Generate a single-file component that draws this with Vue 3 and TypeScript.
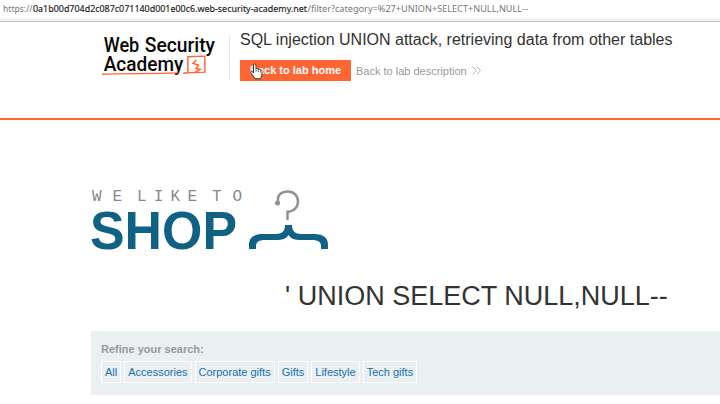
<script setup lang="ts">
const categories: string[] = ['All', 'Accessories', 'Corporate gifts', 'Gifts', 'Lifestyle', 'Tech gifts']
</script>

<template>
  <div class="page">
    <div class="address">
      <svg width="540" height="18" role="img">
        <text class="url dim" x="3" y="12" textLength="29.5" lengthAdjust="spacingAndGlyphs">https://</text>
        <text class="url host" x="33" y="12" textLength="274" lengthAdjust="spacingAndGlyphs">0a1b00d704d2c087c071140d001e00c6.web-security-academy.net</text>
        <text class="url dim" x="307.500" y="12" textLength="220.500" lengthAdjust="spacingAndGlyphs">/filter?category=%27+UNION+SELECT+NULL,NULL--</text>
      </svg>
    </div>

    <header class="banner">
      <svg class="academy" width="139" height="52" viewBox="0 0 139 52">
        <g class="academy-name">
          <text x="3" y="19" textLength="42" lengthAdjust="spacingAndGlyphs">Web</text>
          <text x="51.500" y="19" textLength="83" lengthAdjust="spacingAndGlyphs">Security</text>
          <text x="3" y="41" textLength="94" lengthAdjust="spacingAndGlyphs">Academy</text>
        </g>
        <path d="M1 45.200C25 44.200 59 44.800 91 43.600M97 43.700H102M102.500 44V24.500L122.500 23.800V42.700L102 43.500" fill="none" stroke="#ff6633" stroke-width="1.700" />
        <path d="M112.500 28.500L108.500 32.500L115 34.500L112 38.500L117 39.500L113 42L111 41.500" fill="none" stroke="#ff6633" stroke-width="1.700" />
      </svg>
      <div class="lab">
        <h2>SQL injection UNION attack, retrieving data from other tables</h2>
        <div class="actions">
          <a class="home">Back to lab home
            <svg class="pointer" width="13" height="17" viewBox="0 0 13 17">
              <path d="M3.500 9V2.200C3.500.5 6 .5 6 2.200V6C6.300 5 8 5.200 8.200 6.500C8.700 5.700 10 6 10.200 7.200C11 6.800 12 7.300 12 8.500V12C12 13.500 10.800 14.300 10.500 15.800H5C4.500 13.700 1 11.200.8 9.300C.8 8 2.300 7.800 3.500 10Z" fill="#fff" stroke="#33302e" stroke-width="1" />
              <path d="M6 6V9M8.200 6.500V9M10.200 7.500V9.500" fill="none" stroke="#444" stroke-width=".7" />
            </svg>
          </a>
          <a class="description">Back to lab description</a>
          <svg class="chevrons" width="10" height="9" viewBox="0 0 10 9"><path d="M1 .7L4.500 4.500L1 8.300M5 .7L8.500 4.500L5 8.300" fill="none" stroke="#aaa" stroke-width=".9" /></svg>
        </div>
      </div>
    </header>

    <main class="content">
      <svg class="shop" width="240" height="64" viewBox="0 0 240 64">
        <text class="like" x="1" y="15" textLength="30" lengthAdjust="spacing">WE</text>
        <text class="like" x="46" y="15" textLength="60" lengthAdjust="spacing">LIKE</text>
        <text class="like" x="121" y="15" textLength="30" lengthAdjust="spacing">TO</text>
        <text class="shop-name" x="-1" y="63" textLength="147" lengthAdjust="spacingAndGlyphs">SHOP</text>
        <path d="M187 16C186 8 191 5.500 197 5.500C203 5.500 207 10 207 15.500C207 21 203 25.500 196.500 25.800V34" fill="none" stroke="#929292" stroke-width="2.500" />
        <circle cx="186.500" cy="17" r="2.500" fill="#929292" />
        <path d="M194 39H201C201 45 204 48 210 48H223C233 48 237 52 237 59V63H230V60C230 56 227 54 221 54H210C204 54 200 53 197.500 49C195 53 191 54 185 54H174C168 54 165 56 165 60V63H158V59C158 52 162 48 172 48H185C191 48 194 45 194 39Z" fill="#116185" />
      </svg>
      <h1>' UNION SELECT NULL,NULL--</h1>
      <section class="filters">
        <label>Refine your search:</label>
        <nav><a v-for="category in categories" :key="category">{{ category }}</a></nav>
      </section>
    </main>
  </div>
</template>

<style>
body { margin: 0; background: #fff; overflow: hidden; }
</style>

<style scoped>
* { box-sizing: border-box; }
.page { width: 720px; height: 404px; overflow: hidden; background: #fff; font-family: "Liberation Sans", Arial, sans-serif; color: #333332; }
svg { display: block; flex: none; }
.address { height: 22px; border-bottom: 1px solid #c4c4c4; background: linear-gradient(#fff 18px, #f2f2f2 18px); }
.url { font: 9px "Noto Sans", sans-serif; }
.dim { fill: #777; }
.host { fill: #202020; stroke: #202020; stroke-width: .15px; }
.banner { height: 98px; display: flex; padding: 14px 0 0 91px; border-bottom: 2px solid #ff6633; }
.academy { border-right: 1px solid #e5e5e5; height: 44px; overflow: visible; }
.academy-name { font: 500 24px Roboto, sans-serif; fill: #080808; }
.lab { padding-left: 10px; }
h2 { margin: -6px 0 0; font-size: 16px; line-height: 20px; font-weight: 400; white-space: nowrap; }
.actions { display: flex; align-items: center; margin-top: 10px; height: 21px; font-size: 11px; }
.home { position: relative; width: 111px; height: 21px; background: #ff6633; color: #fff; font-weight: 700; text-align: center; line-height: 21px; white-space: nowrap; }
.pointer { position: absolute; left: 10px; top: 3px; }
.description { margin-left: 5px; color: #999; white-space: nowrap; }
.chevrons { margin-left: 5px; }
.content { padding: 66px 0 0 91px; }
.like { font: 16px "Liberation Mono", monospace; fill: #888; }
.shop-name { font: bold 53px "Liberation Sans", sans-serif; fill: #116185; }
h1 { margin: 31px 0 0 194px; font-size: 27px; line-height: 30px; font-weight: 400; white-space: nowrap; }
.filters { margin-top: 20px; height: 64px; background: #eaeff2; padding: 12px 10px; font-size: 11px; }
label { display: block; height: 13px; line-height: 13px; color: #999; font-weight: 700; }
nav { display: flex; gap: 3px; margin-top: 5px; }
nav a { border: 1px solid #fff; height: 22px; line-height: 20px; padding: 0 3px; color: #1771af; white-space: nowrap; }
</style>
